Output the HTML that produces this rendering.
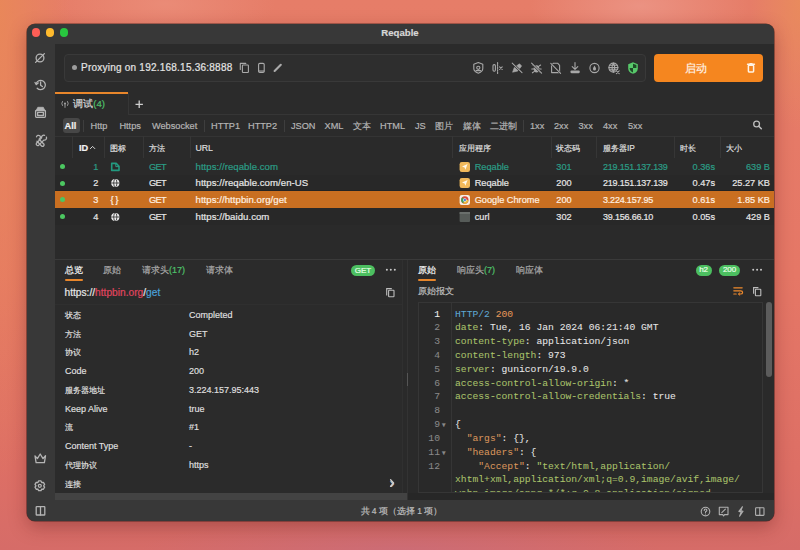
<!DOCTYPE html>
<html><head><meta charset="utf-8"><style>
*{box-sizing:border-box;margin:0;padding:0}
html,body{width:800px;height:550px;overflow:hidden}
body{font-family:"Liberation Sans",sans-serif;position:relative;
background:
 radial-gradient(ellipse 110px 45px at 640px 6px, rgba(236,150,135,0.85), rgba(236,150,135,0) 100%),
 radial-gradient(ellipse 110px 40px at 165px 4px, rgba(236,145,125,0.7), rgba(236,145,125,0) 100%),
 radial-gradient(ellipse 260px 32px at 400px 550px, rgba(196,108,128,0.55), rgba(196,108,128,0) 100%),
 radial-gradient(ellipse 50px 130px at 800px 0px, rgba(233,140,92,0.9), rgba(233,140,92,0) 100%),
 radial-gradient(ellipse 70px 480px at 0px 0px, rgba(233,136,88,0.9), rgba(233,136,88,0) 100%),
 linear-gradient(180deg,#e67d68 0%,#e57766 50%,#dd6f65 85%,#d66c68 100%);
}
.abs{position:absolute}
.t{position:absolute;white-space:nowrap;-webkit-text-stroke:0.2px currentColor}
svg.i{position:absolute;overflow:visible}
</style></head><body>
<div class="abs" style="left:26.5px;top:24px;width:747px;height:496.6px;border-radius:8px;background:#383838;box-shadow:0 0 0 0.6px rgba(20,10,10,0.6),0 6px 18px rgba(90,20,20,0.35);overflow:hidden">
</div>
<div class="t" style="top:27.00px;font-size:9.6px;color:#d6d6d6;font-weight:bold;line-height:12px;left:300.00px;width:200px;text-align:center;">Reqable</div>
<div class="abs" style="left:31.7px;top:28.2px;width:8.6px;height:8.6px;border-radius:50%;background:#fd5e56"></div>
<div class="abs" style="left:45.5px;top:28.2px;width:8.6px;height:8.6px;border-radius:50%;background:#feba2d"></div>
<div class="abs" style="left:59.5px;top:28.2px;width:8.6px;height:8.6px;border-radius:50%;background:#28c73f"></div>
<div class="abs" style="left:54.5px;top:44px;width:719.0px;height:456px;background:#2b2b2b;"></div>
<div class="abs" style="left:64px;top:54px;width:582px;height:28px;background:#2e2e2e;border:1px solid #393939;border-radius:4px"></div>
<div class="abs" style="left:72.2px;top:65px;width:5px;height:5px;border-radius:50%;background:#9c9c9c"></div>
<div class="t" style="top:62.00px;font-size:10px;color:#e4e4e4;font-weight:normal;line-height:12px;left:81.00px;letter-spacing:0.23px">Proxying on 192.168.15.36:8888</div>
<div class="abs" style="left:654px;top:54px;width:109px;height:28px;background:#f5861f;border-radius:4px"></div>
<div class="t" style="top:62.00px;font-size:10.5px;color:#fff3e6;font-weight:normal;line-height:12px;left:596.00px;width:200px;text-align:center;">启动</div>
<div class="abs" style="left:54.5px;top:92.2px;width:73.5px;height:1.7999999999999972px;background:#e8862b;"></div>
<div class="t" style="top:98.00px;font-size:9.6px;color:#d8d8d8;font-weight:normal;line-height:12px;left:73.20px;">调试<span style="color:#4fc26b">(4)</span></div>
<div class="abs" style="left:128px;top:93px;width:1px;height:21.5px;background:#363636;"></div>
<div class="abs" style="left:128px;top:114px;width:645.5px;height:1px;background:#363636;"></div>
<div class="abs" style="left:63.2px;top:118.3px;width:16.599999999999994px;height:14.399999999999991px;background:#474747;border-radius:3px"></div>
<div class="t" style="top:120.00px;font-size:9.2px;color:#f0f0f0;font-weight:bold;line-height:12px;left:64.50px;">All</div>
<div class="t" style="top:120.00px;font-size:9.2px;color:#b4b4b4;font-weight:normal;line-height:12px;left:90.50px;width:22.400000000000006px;">Http</div>
<div class="t" style="top:120.00px;font-size:9.2px;color:#b4b4b4;font-weight:normal;line-height:12px;left:119.40px;width:25.69999999999999px;">Https</div>
<div class="t" style="top:120.00px;font-size:9.2px;color:#b4b4b4;font-weight:normal;line-height:12px;left:152.00px;width:49px;">Websocket</div>
<div class="t" style="top:120.00px;font-size:9.2px;color:#b4b4b4;font-weight:normal;line-height:12px;left:211.00px;width:31px;">HTTP1</div>
<div class="t" style="top:120.00px;font-size:9.2px;color:#b4b4b4;font-weight:normal;line-height:12px;left:248.00px;width:32.80000000000001px;">HTTP2</div>
<div class="t" style="top:120.00px;font-size:9.2px;color:#b4b4b4;font-weight:normal;line-height:12px;left:291.00px;width:27px;">JSON</div>
<div class="t" style="top:120.00px;font-size:9.2px;color:#b4b4b4;font-weight:normal;line-height:12px;left:324.50px;width:22.0px;">XML</div>
<div class="t" style="top:120.00px;font-size:8.5px;color:#b4b4b4;font-weight:normal;line-height:12px;left:353.00px;width:21px;">文本</div>
<div class="t" style="top:120.00px;font-size:9.2px;color:#b4b4b4;font-weight:normal;line-height:12px;left:380.00px;width:28px;">HTML</div>
<div class="t" style="top:120.00px;font-size:9.2px;color:#b4b4b4;font-weight:normal;line-height:12px;left:415.00px;width:14px;">JS</div>
<div class="t" style="top:120.00px;font-size:8.5px;color:#b4b4b4;font-weight:normal;line-height:12px;left:435.00px;width:20.5px;">图片</div>
<div class="t" style="top:120.00px;font-size:8.5px;color:#b4b4b4;font-weight:normal;line-height:12px;left:462.50px;width:20.5px;">媒体</div>
<div class="t" style="top:120.00px;font-size:8.5px;color:#b4b4b4;font-weight:normal;line-height:12px;left:490.00px;width:30px;">二进制</div>
<div class="t" style="top:120.00px;font-size:9.2px;color:#b4b4b4;font-weight:normal;line-height:12px;left:530.00px;width:16.5px;">1xx</div>
<div class="t" style="top:120.00px;font-size:9.2px;color:#b4b4b4;font-weight:normal;line-height:12px;left:554.00px;width:17.5px;">2xx</div>
<div class="t" style="top:120.00px;font-size:9.2px;color:#b4b4b4;font-weight:normal;line-height:12px;left:578.50px;width:18.0px;">3xx</div>
<div class="t" style="top:120.00px;font-size:9.2px;color:#b4b4b4;font-weight:normal;line-height:12px;left:603.00px;width:17.5px;">4xx</div>
<div class="t" style="top:120.00px;font-size:9.2px;color:#b4b4b4;font-weight:normal;line-height:12px;left:628.00px;width:17.5px;">5xx</div>
<div class="abs" style="left:83.3px;top:119.5px;width:1.0px;height:12.5px;background:#3e3e3e;"></div>
<div class="abs" style="left:203.7px;top:119.5px;width:1.0px;height:12.5px;background:#3e3e3e;"></div>
<div class="abs" style="left:284px;top:119.5px;width:1px;height:12.5px;background:#3e3e3e;"></div>
<div class="abs" style="left:522.5px;top:119.5px;width:1.0px;height:12.5px;background:#3e3e3e;"></div>
<div class="abs" style="left:54.5px;top:136px;width:719.0px;height:124px;background:#2a2a2a;"></div>
<div class="abs" style="left:54.5px;top:135.6px;width:719.0px;height:1.0px;background:#343434;"></div>
<div class="abs" style="left:54.5px;top:157.6px;width:719.0px;height:1.0px;background:#363636;"></div>
<div class="abs" style="left:72.2px;top:136px;width:1.0px;height:22px;background:#363636;"></div>
<div class="abs" style="left:103.9px;top:136px;width:1.0px;height:22px;background:#363636;"></div>
<div class="abs" style="left:142.7px;top:136px;width:1.0px;height:22px;background:#363636;"></div>
<div class="abs" style="left:189.6px;top:136px;width:1.0px;height:22px;background:#363636;"></div>
<div class="abs" style="left:452px;top:136px;width:1px;height:22px;background:#363636;"></div>
<div class="abs" style="left:550.5px;top:136px;width:1.0px;height:22px;background:#363636;"></div>
<div class="abs" style="left:595.8px;top:136px;width:1.0px;height:22px;background:#363636;"></div>
<div class="abs" style="left:674.3px;top:136px;width:1.0px;height:22px;background:#363636;"></div>
<div class="abs" style="left:719.8px;top:136px;width:1.0px;height:22px;background:#363636;"></div>
<div class="t" style="top:141.50px;font-size:9.2px;color:#f2f2f2;font-weight:bold;line-height:12px;left:79.00px;">ID</div>
<div class="t" style="top:141.50px;font-size:8.4px;color:#dcdcdc;font-weight:normal;line-height:12px;left:109.70px;">图标</div>
<div class="t" style="top:141.50px;font-size:8.4px;color:#dedede;font-weight:normal;line-height:12px;left:148.90px;">方法</div>
<div class="t" style="top:141.50px;font-size:8.8px;color:#dedede;font-weight:normal;line-height:12px;left:195.40px;">URL</div>
<div class="t" style="top:141.50px;font-size:8.4px;color:#dedede;font-weight:normal;line-height:12px;left:458.80px;">应用程序</div>
<div class="t" style="top:141.50px;font-size:8.4px;color:#dedede;font-weight:normal;line-height:12px;left:556.30px;">状态码</div>
<div class="t" style="top:141.50px;font-size:8.4px;color:#dedede;font-weight:normal;line-height:12px;left:603.00px;">服务器IP</div>
<div class="t" style="top:141.50px;font-size:8.4px;color:#dedede;font-weight:normal;line-height:12px;left:680.00px;">时长</div>
<div class="t" style="top:141.50px;font-size:8.4px;color:#dedede;font-weight:normal;line-height:12px;left:726.00px;">大小</div>
<div class="abs" style="left:54.5px;top:158.4px;width:719.0px;height:16.599999999999994px;background:#2a2a2a;"></div>
<div class="abs" style="left:59.6px;top:164.10px;width:5.2px;height:5.2px;border-radius:50%;background:#4cc761"></div>
<div class="t" style="top:160.70px;font-size:9.2px;color:#2a9d86;font-weight:normal;line-height:12px;right:701.60px;">1</div>
<div class="t" style="top:160.70px;font-size:9.2px;color:#2a9d86;font-weight:normal;line-height:12px;left:149.00px;letter-spacing:-0.6px">GET</div>
<div class="t" style="top:160.70px;font-size:9.6px;color:#2a9d86;font-weight:normal;line-height:12px;left:195.50px;letter-spacing:0.05px">https://reqable.com</div>
<div class="t" style="top:160.70px;font-size:9.2px;color:#2a9d86;font-weight:normal;line-height:12px;left:474.70px;">Reqable</div>
<div class="t" style="top:160.70px;font-size:9.2px;color:#2a9d86;font-weight:normal;line-height:12px;left:556.30px;">301</div>
<div class="t" style="top:160.70px;font-size:9px;color:#2a9d86;font-weight:normal;line-height:12px;left:603.00px;letter-spacing:-0.2px">219.151.137.139</div>
<div class="t" style="top:160.70px;font-size:9.2px;color:#2a9d86;font-weight:normal;line-height:12px;right:85.00px;">0.36s</div>
<div class="t" style="top:160.70px;font-size:9.2px;color:#2a9d86;font-weight:normal;line-height:12px;right:30.00px;">639 B</div>
<div class="abs" style="left:54.5px;top:175.0px;width:719.0px;height:16.599999999999994px;background:#282828;"></div>
<div class="abs" style="left:59.6px;top:180.70px;width:5.2px;height:5.2px;border-radius:50%;background:#4cc761"></div>
<div class="t" style="top:177.30px;font-size:9.2px;color:#e6e6e6;font-weight:normal;line-height:12px;right:701.60px;">2</div>
<div class="t" style="top:177.30px;font-size:9.2px;color:#e6e6e6;font-weight:normal;line-height:12px;left:149.00px;letter-spacing:-0.6px">GET</div>
<div class="t" style="top:177.30px;font-size:9.6px;color:#e6e6e6;font-weight:normal;line-height:12px;left:195.50px;letter-spacing:0.05px">https://reqable.com/en-US</div>
<div class="t" style="top:177.30px;font-size:9.2px;color:#e6e6e6;font-weight:normal;line-height:12px;left:474.70px;">Reqable</div>
<div class="t" style="top:177.30px;font-size:9.2px;color:#e6e6e6;font-weight:normal;line-height:12px;left:556.30px;">200</div>
<div class="t" style="top:177.30px;font-size:9px;color:#e6e6e6;font-weight:normal;line-height:12px;left:603.00px;letter-spacing:-0.2px">219.151.137.139</div>
<div class="t" style="top:177.30px;font-size:9.2px;color:#e6e6e6;font-weight:normal;line-height:12px;right:85.00px;">0.47s</div>
<div class="t" style="top:177.30px;font-size:9.2px;color:#e6e6e6;font-weight:normal;line-height:12px;right:30.00px;">25.27 KB</div>
<div class="abs" style="left:54.5px;top:190.2px;width:719.0px;height:19.400000000000006px;background:#232323;"></div>
<div class="abs" style="left:54.5px;top:191.0px;width:719.0px;height:17.80000000000001px;background:#c96f21;"></div>
<div class="abs" style="left:59.6px;top:197.30px;width:5.2px;height:5.2px;border-radius:50%;background:#4cc761"></div>
<div class="t" style="top:193.90px;font-size:9.2px;color:#fff0e0;font-weight:normal;line-height:12px;right:701.60px;">3</div>
<div class="t" style="top:193.90px;font-size:9.2px;color:#fff0e0;font-weight:normal;line-height:12px;left:149.00px;letter-spacing:-0.6px">GET</div>
<div class="t" style="top:193.90px;font-size:9.6px;color:#fff0e0;font-weight:normal;line-height:12px;left:195.50px;letter-spacing:0.05px">https://httpbin.org/get</div>
<div class="t" style="top:193.90px;font-size:9.2px;color:#fff0e0;font-weight:normal;line-height:12px;left:474.70px;">Google Chrome</div>
<div class="t" style="top:193.90px;font-size:9.2px;color:#fff0e0;font-weight:normal;line-height:12px;left:556.30px;">200</div>
<div class="t" style="top:193.90px;font-size:9px;color:#fff0e0;font-weight:normal;line-height:12px;left:603.00px;letter-spacing:-0.2px">3.224.157.95</div>
<div class="t" style="top:193.90px;font-size:9.2px;color:#fff0e0;font-weight:normal;line-height:12px;right:85.00px;">0.61s</div>
<div class="t" style="top:193.90px;font-size:9.2px;color:#fff0e0;font-weight:normal;line-height:12px;right:30.00px;">1.85 KB</div>
<div class="abs" style="left:54.5px;top:208.2px;width:719.0px;height:16.600000000000023px;background:#282828;"></div>
<div class="abs" style="left:59.6px;top:213.90px;width:5.2px;height:5.2px;border-radius:50%;background:#4cc761"></div>
<div class="t" style="top:210.50px;font-size:9.2px;color:#e6e6e6;font-weight:normal;line-height:12px;right:701.60px;">4</div>
<div class="t" style="top:210.50px;font-size:9.2px;color:#e6e6e6;font-weight:normal;line-height:12px;left:149.00px;letter-spacing:-0.6px">GET</div>
<div class="t" style="top:210.50px;font-size:9.6px;color:#e6e6e6;font-weight:normal;line-height:12px;left:195.50px;letter-spacing:0.05px">https://baidu.com</div>
<div class="t" style="top:210.50px;font-size:9.2px;color:#e6e6e6;font-weight:normal;line-height:12px;left:474.70px;">curl</div>
<div class="t" style="top:210.50px;font-size:9.2px;color:#e6e6e6;font-weight:normal;line-height:12px;left:556.30px;">302</div>
<div class="t" style="top:210.50px;font-size:9px;color:#e6e6e6;font-weight:normal;line-height:12px;left:603.00px;letter-spacing:-0.2px">39.156.66.10</div>
<div class="t" style="top:210.50px;font-size:9.2px;color:#e6e6e6;font-weight:normal;line-height:12px;right:85.00px;">0.05s</div>
<div class="t" style="top:210.50px;font-size:9.2px;color:#e6e6e6;font-weight:normal;line-height:12px;right:30.00px;">429 B</div>
<div class="abs" style="left:54.5px;top:258.8px;width:719.0px;height:1.0px;background:#3a3a3a;"></div>
<div class="abs" style="left:54.5px;top:259.8px;width:347.5px;height:233.2px;background:#2b2b2b;"></div>
<div class="t" style="top:264.00px;font-size:9px;color:#f4f4f4;font-weight:normal;line-height:12px;left:65.00px;">总览</div>
<div class="abs" style="left:65px;top:279px;width:18px;height:2px;background:#e8862b;border-radius:1px"></div>
<div class="t" style="top:264.00px;font-size:9px;color:#a8a8a8;font-weight:normal;line-height:12px;left:103.00px;">原始</div>
<div class="t" style="top:264.00px;font-size:9px;color:#a8a8a8;font-weight:normal;line-height:12px;left:142.00px;">请求头<span style="color:#4fc26b">(17)</span></div>
<div class="t" style="top:264.00px;font-size:9px;color:#a8a8a8;font-weight:normal;line-height:12px;left:205.50px;">请求体</div>
<div class="abs" style="left:351px;top:265px;width:24px;height:11px;background:#4cbf60;border-radius:6px"></div>
<div class="t" style="top:264.50px;font-size:8px;color:#e8ffe8;font-weight:normal;line-height:12px;left:263.00px;width:200px;text-align:center;">GET</div>
<svg class="i" style="left:383px;top:265px" width="16" height="10" viewBox="383 265 16 10"><circle cx="386.9" cy="269.8" r="1" fill="#c8c8c8"/><circle cx="390.8" cy="269.8" r="1" fill="#c8c8c8"/><circle cx="394.8" cy="269.8" r="1" fill="#c8c8c8"/></svg>
<div class="t" style="top:287.00px;font-size:10.2px;color:#e8e8e8;font-weight:normal;line-height:12px;left:64.50px;">https://<span style="color:#e0455f">httpbin.org</span>/<span style="color:#4aa0d8">get</span></div>
<div class="abs" style="left:54.5px;top:304.3px;width:347.5px;height:0.8000000000000114px;background:#2f2f2f;"></div>
<div class="t" style="top:308.80px;font-size:8.4px;color:#dedede;font-weight:normal;line-height:12px;left:65.00px;">状态</div>
<div class="t" style="top:308.80px;font-size:9px;color:#dedede;font-weight:normal;line-height:12px;left:189.00px;">Completed</div>
<div class="t" style="top:327.55px;font-size:8.4px;color:#dedede;font-weight:normal;line-height:12px;left:65.00px;">方法</div>
<div class="t" style="top:327.55px;font-size:9px;color:#dedede;font-weight:normal;line-height:12px;left:189.00px;">GET</div>
<div class="t" style="top:346.30px;font-size:8.4px;color:#dedede;font-weight:normal;line-height:12px;left:65.00px;">协议</div>
<div class="t" style="top:346.30px;font-size:9px;color:#dedede;font-weight:normal;line-height:12px;left:189.00px;">h2</div>
<div class="t" style="top:365.05px;font-size:9px;color:#dedede;font-weight:normal;line-height:12px;left:65.00px;">Code</div>
<div class="t" style="top:365.05px;font-size:9px;color:#dedede;font-weight:normal;line-height:12px;left:189.00px;">200</div>
<div class="t" style="top:383.80px;font-size:8.4px;color:#dedede;font-weight:normal;line-height:12px;left:65.00px;">服务器地址</div>
<div class="t" style="top:383.80px;font-size:9px;color:#dedede;font-weight:normal;line-height:12px;left:189.00px;">3.224.157.95:443</div>
<div class="t" style="top:402.55px;font-size:9px;color:#dedede;font-weight:normal;line-height:12px;left:65.00px;">Keep Alive</div>
<div class="t" style="top:402.55px;font-size:9px;color:#dedede;font-weight:normal;line-height:12px;left:189.00px;">true</div>
<div class="t" style="top:421.30px;font-size:8.4px;color:#dedede;font-weight:normal;line-height:12px;left:65.00px;">流</div>
<div class="t" style="top:421.30px;font-size:9px;color:#dedede;font-weight:normal;line-height:12px;left:189.00px;">#1</div>
<div class="t" style="top:440.05px;font-size:9px;color:#dedede;font-weight:normal;line-height:12px;left:65.00px;">Content Type</div>
<div class="t" style="top:440.05px;font-size:9px;color:#dedede;font-weight:normal;line-height:12px;left:189.00px;">-</div>
<div class="t" style="top:458.80px;font-size:8.4px;color:#dedede;font-weight:normal;line-height:12px;left:65.00px;">代理协议</div>
<div class="t" style="top:458.80px;font-size:9px;color:#dedede;font-weight:normal;line-height:12px;left:189.00px;">https</div>
<div class="t" style="top:477.55px;font-size:8.4px;color:#dedede;font-weight:normal;line-height:12px;left:65.00px;">连接</div>
<div class="t" style="top:477.00px;font-size:14px;color:#cfcfcf;font-weight:normal;line-height:12px;left:292.00px;width:200px;text-align:center;">›</div>
<div class="abs" style="left:402px;top:259.8px;width:6px;height:240.2px;background:#2a2a2a;"></div>
<div class="abs" style="left:401.6px;top:259.8px;width:0.7999999999999545px;height:233.2px;background:#303030;"></div>
<div class="abs" style="left:54.5px;top:493px;width:352.5px;height:7px;background:#434343;"></div>
<div class="abs" style="left:407px;top:259.8px;width:1px;height:240.2px;background:#333333;"></div>
<div class="abs" style="left:406.8px;top:372.7px;width:1.1999999999999886px;height:13.300000000000011px;background:#555555;"></div>
<div class="abs" style="left:408px;top:259.8px;width:365.5px;height:240.2px;background:#2a2a2a;"></div>
<div class="t" style="top:264.00px;font-size:9px;color:#f4f4f4;font-weight:normal;line-height:12px;left:418.00px;">原始</div>
<div class="abs" style="left:418px;top:279px;width:18px;height:2px;background:#e8862b;border-radius:1px"></div>
<div class="t" style="top:264.00px;font-size:9px;color:#a8a8a8;font-weight:normal;line-height:12px;left:457.00px;">响应头<span style="color:#4fc26b">(7)</span></div>
<div class="t" style="top:264.00px;font-size:9px;color:#a8a8a8;font-weight:normal;line-height:12px;left:516.00px;">响应体</div>
<div class="abs" style="left:695.5px;top:264.5px;width:16.299999999999955px;height:11.300000000000011px;background:#4cbf60;border-radius:6px"></div>
<div class="t" style="top:264.30px;font-size:8px;color:#e8ffe8;font-weight:normal;line-height:12px;left:603.60px;width:200px;text-align:center;">h2</div>
<div class="abs" style="left:718.8px;top:264.5px;width:21.700000000000045px;height:11.300000000000011px;background:#4cbf60;border-radius:6px"></div>
<div class="t" style="top:264.30px;font-size:8px;color:#e8ffe8;font-weight:normal;line-height:12px;left:629.60px;width:200px;text-align:center;">200</div>
<svg class="i" style="left:750px;top:265px" width="16" height="10" viewBox="750 265 16 10"><circle cx="753.2" cy="269.8" r="1" fill="#c8c8c8"/><circle cx="757.1" cy="269.8" r="1" fill="#c8c8c8"/><circle cx="761" cy="269.8" r="1" fill="#c8c8c8"/></svg>
<div class="t" style="top:285.00px;font-size:8.5px;color:#bdbdbd;font-weight:normal;line-height:12px;left:418.00px;">原始报文</div>
<div class="abs" style="left:418.3px;top:302px;width:345.2px;height:191px;background:#292929;border:1px solid #363636;border-bottom:none"></div>
<div class="abs" style="left:451px;top:303px;width:1px;height:190px;background:#353535;"></div>
<div class="t" style="top:308.50px;font-size:9.7px;color:#f0f0f0;font-weight:normal;line-height:12px;font-family:'Liberation Mono',monospace;right:360.00px;-webkit-text-stroke:0.05px currentColor;">1</div>
<div class="t" style="top:308.50px;font-size:9.7px;color:#e6e6e6;font-weight:normal;line-height:12px;font-family:'Liberation Mono',monospace;left:455.00px;white-space:pre;-webkit-text-stroke:0.05px currentColor;"><span style="color:#5fa8d3">HTTP/2</span> <span style="color:#e3975a">200</span></div>
<div class="t" style="top:322.32px;font-size:9.7px;color:#8a8a8a;font-weight:normal;line-height:12px;font-family:'Liberation Mono',monospace;right:360.00px;-webkit-text-stroke:0.05px currentColor;">2</div>
<div class="t" style="top:322.32px;font-size:9.7px;color:#e6e6e6;font-weight:normal;line-height:12px;font-family:'Liberation Mono',monospace;left:455.00px;white-space:pre;-webkit-text-stroke:0.05px currentColor;"><span style="color:#a9c26b">date</span>: Tue, 16 Jan 2024 06:21:40 GMT</div>
<div class="t" style="top:336.14px;font-size:9.7px;color:#8a8a8a;font-weight:normal;line-height:12px;font-family:'Liberation Mono',monospace;right:360.00px;-webkit-text-stroke:0.05px currentColor;">3</div>
<div class="t" style="top:336.14px;font-size:9.7px;color:#e6e6e6;font-weight:normal;line-height:12px;font-family:'Liberation Mono',monospace;left:455.00px;white-space:pre;-webkit-text-stroke:0.05px currentColor;"><span style="color:#a9c26b">content-type</span>: application/json</div>
<div class="t" style="top:349.96px;font-size:9.7px;color:#8a8a8a;font-weight:normal;line-height:12px;font-family:'Liberation Mono',monospace;right:360.00px;-webkit-text-stroke:0.05px currentColor;">4</div>
<div class="t" style="top:349.96px;font-size:9.7px;color:#e6e6e6;font-weight:normal;line-height:12px;font-family:'Liberation Mono',monospace;left:455.00px;white-space:pre;-webkit-text-stroke:0.05px currentColor;"><span style="color:#a9c26b">content-length</span>: 973</div>
<div class="t" style="top:363.78px;font-size:9.7px;color:#8a8a8a;font-weight:normal;line-height:12px;font-family:'Liberation Mono',monospace;right:360.00px;-webkit-text-stroke:0.05px currentColor;">5</div>
<div class="t" style="top:363.78px;font-size:9.7px;color:#e6e6e6;font-weight:normal;line-height:12px;font-family:'Liberation Mono',monospace;left:455.00px;white-space:pre;-webkit-text-stroke:0.05px currentColor;"><span style="color:#a9c26b">server</span>: gunicorn/19.9.0</div>
<div class="t" style="top:377.60px;font-size:9.7px;color:#8a8a8a;font-weight:normal;line-height:12px;font-family:'Liberation Mono',monospace;right:360.00px;-webkit-text-stroke:0.05px currentColor;">6</div>
<div class="t" style="top:377.60px;font-size:9.7px;color:#e6e6e6;font-weight:normal;line-height:12px;font-family:'Liberation Mono',monospace;left:455.00px;white-space:pre;-webkit-text-stroke:0.05px currentColor;"><span style="color:#a9c26b">access-control-allow-origin</span>: *</div>
<div class="t" style="top:391.42px;font-size:9.7px;color:#8a8a8a;font-weight:normal;line-height:12px;font-family:'Liberation Mono',monospace;right:360.00px;-webkit-text-stroke:0.05px currentColor;">7</div>
<div class="t" style="top:391.42px;font-size:9.7px;color:#e6e6e6;font-weight:normal;line-height:12px;font-family:'Liberation Mono',monospace;left:455.00px;white-space:pre;-webkit-text-stroke:0.05px currentColor;"><span style="color:#a9c26b">access-control-allow-credentials</span>: true</div>
<div class="t" style="top:405.24px;font-size:9.7px;color:#8a8a8a;font-weight:normal;line-height:12px;font-family:'Liberation Mono',monospace;right:360.00px;-webkit-text-stroke:0.05px currentColor;">8</div>
<div class="t" style="top:405.24px;font-size:9.7px;color:#e6e6e6;font-weight:normal;line-height:12px;font-family:'Liberation Mono',monospace;left:455.00px;white-space:pre;-webkit-text-stroke:0.05px currentColor;"></div>
<div class="t" style="top:419.06px;font-size:9.7px;color:#8a8a8a;font-weight:normal;line-height:12px;font-family:'Liberation Mono',monospace;right:360.00px;-webkit-text-stroke:0.05px currentColor;">9</div>
<div class="t" style="top:419.06px;font-size:7px;color:#8a8a8a;font-weight:normal;line-height:12px;left:442.20px;">▾</div>
<div class="t" style="top:419.06px;font-size:9.7px;color:#e6e6e6;font-weight:normal;line-height:12px;font-family:'Liberation Mono',monospace;left:455.00px;white-space:pre;-webkit-text-stroke:0.05px currentColor;">{</div>
<div class="t" style="top:432.88px;font-size:9.7px;color:#8a8a8a;font-weight:normal;line-height:12px;font-family:'Liberation Mono',monospace;right:360.00px;-webkit-text-stroke:0.05px currentColor;">10</div>
<div class="t" style="top:432.88px;font-size:9.7px;color:#e6e6e6;font-weight:normal;line-height:12px;font-family:'Liberation Mono',monospace;left:455.00px;white-space:pre;-webkit-text-stroke:0.05px currentColor;">  <span style="color:#d8955c">"args"</span>: {},</div>
<div class="t" style="top:446.70px;font-size:9.7px;color:#8a8a8a;font-weight:normal;line-height:12px;font-family:'Liberation Mono',monospace;right:360.00px;-webkit-text-stroke:0.05px currentColor;">11</div>
<div class="t" style="top:446.70px;font-size:7px;color:#8a8a8a;font-weight:normal;line-height:12px;left:442.20px;">▾</div>
<div class="t" style="top:446.70px;font-size:9.7px;color:#e6e6e6;font-weight:normal;line-height:12px;font-family:'Liberation Mono',monospace;left:455.00px;white-space:pre;-webkit-text-stroke:0.05px currentColor;">  <span style="color:#d8955c">"headers"</span>: {</div>
<div class="t" style="top:460.52px;font-size:9.7px;color:#8a8a8a;font-weight:normal;line-height:12px;font-family:'Liberation Mono',monospace;right:360.00px;-webkit-text-stroke:0.05px currentColor;">12</div>
<div class="t" style="top:460.52px;font-size:9.7px;color:#e6e6e6;font-weight:normal;line-height:12px;font-family:'Liberation Mono',monospace;left:455.00px;white-space:pre;-webkit-text-stroke:0.05px currentColor;">    <span style="color:#d8955c">"Accept"</span>: <span style="color:#a9c26b">"text/html,application/</span></div>
<div class="t" style="top:474.34px;font-size:9.7px;color:#e6e6e6;font-weight:normal;line-height:12px;font-family:'Liberation Mono',monospace;left:455.00px;white-space:pre;-webkit-text-stroke:0.05px currentColor;"><span style="color:#a9c26b">xhtml+xml,application/xml;q=0.9,image/avif,image/</span></div>
<div class="t" style="top:488.16px;font-size:9.7px;color:#e6e6e6;font-weight:normal;line-height:12px;font-family:'Liberation Mono',monospace;left:455.00px;white-space:pre;-webkit-text-stroke:0.05px currentColor;"><span style="color:#a9c26b">webp,image/apng,*/*;q=0.8,application/signed-</span></div>
<div class="abs" style="left:766.2px;top:301.8px;width:6.0px;height:75.69999999999999px;background:#5c5c5c;border-radius:3px"></div>
<div class="abs" style="left:408px;top:493px;width:365.5px;height:7px;background:#272727;"></div>
<div class="abs" style="left:418.3px;top:492.4px;width:345.2px;height:0.8000000000000114px;background:#363636;"></div>
<svg class="i" style="left:32px;top:50px;" width="16" height="16" viewBox="32 50 16 16"><circle cx="40" cy="58" r="3.9" stroke="#b4b4b4" fill="none" stroke-width="1.3" stroke-linecap="round" stroke-linejoin="round"/><path d="M35.6 62.4 L44.4 53.6" stroke="#b4b4b4" fill="none" stroke-width="1.3" stroke-linecap="round" stroke-linejoin="round" stroke-width="1.6"/></svg>
<svg class="i" style="left:32px;top:77px;" width="16" height="16" viewBox="32 77 16 16"><path d="M36.3 83.2 A4.7 4.7 0 1 1 37.2 88.2" stroke="#b4b4b4" fill="none" stroke-width="1.3" stroke-linecap="round" stroke-linejoin="round"/><path d="M35 82.5 L36.3 84.6 L38.2 83" stroke="#b4b4b4" fill="none" stroke-width="1.3" stroke-linecap="round" stroke-linejoin="round" stroke-width="1.1"/><path d="M40.6 82 L40.6 85.2 L42.4 86.6" stroke="#b4b4b4" fill="none" stroke-width="1.3" stroke-linecap="round" stroke-linejoin="round" stroke-width="1.2"/></svg>
<svg class="i" style="left:32px;top:104px;" width="16" height="16" viewBox="32 104 16 16"><path d="M36.2 110.5 L37.8 107.3 L43.3 107.3 L44.8 110.5 Z" fill="#b4b4b4" stroke="#b4b4b4" stroke-width="0.8" stroke-linejoin="round"/><rect x="35.6" y="110.5" width="9.8" height="6.9" rx="0.8" stroke="#b4b4b4" fill="none" stroke-width="1.3" stroke-linecap="round" stroke-linejoin="round"/><rect x="37.6" y="112.4" width="5.8" height="3.1" stroke="#b4b4b4" fill="none" stroke-width="1.3" stroke-linecap="round" stroke-linejoin="round" stroke-width="0.8"/></svg>
<svg class="i" style="left:32px;top:131px;" width="16" height="18" viewBox="32 131 16 18"><path d="M36.5 136.8 a2 2 0 1 1 2.6 2.4 L44 144.2 a1.6 1.6 0 0 1 -2.2 2 L37 141.3" stroke="#b4b4b4" fill="none" stroke-width="1.3" stroke-linecap="round" stroke-linejoin="round" stroke-width="1.2"/><path d="M44.6 135.3 a2.2 2.2 0 0 0 -3 2.6 L36.4 143.3 a1.6 1.6 0 0 0 2.2 2.1 L43.8 140.1 a2.2 2.2 0 0 0 2.6 -3" stroke="#b4b4b4" fill="none" stroke-width="1.3" stroke-linecap="round" stroke-linejoin="round" stroke-width="1.2"/></svg>
<svg class="i" style="left:32px;top:450px;" width="16" height="16" viewBox="32 450 16 16"><path d="M35 455.8 L37.4 458.6 L40.2 454 L43 458.6 L45.5 455.8 L44.4 462.6 L36.1 462.6 Z" stroke="#b4b4b4" fill="none" stroke-width="1.3" stroke-linecap="round" stroke-linejoin="round" stroke-width="1.3"/></svg>
<svg class="i" style="left:32px;top:478px;" width="16" height="16" viewBox="32 478 16 16"><path d="M38.59 480.95 L41.01 480.95 L41.70 482.51 L43.40 482.33 L44.61 484.42 L43.60 485.80 L44.61 487.18 L43.40 489.27 L41.70 489.09 L41.01 490.65 L38.59 490.65 L37.90 489.09 L36.20 489.27 L34.99 487.18 L36.00 485.80 L34.99 484.42 L36.20 482.33 L37.90 482.51 Z" stroke="#b4b4b4" fill="none" stroke-width="1.3" stroke-linecap="round" stroke-linejoin="round" stroke-width="1.15"/><circle cx="39.8" cy="485.8" r="1.5" stroke="#b4b4b4" fill="none" stroke-width="1.3" stroke-linecap="round" stroke-linejoin="round" stroke-width="1.1"/></svg>
<svg class="i" style="left:32px;top:503px;" width="16" height="16" viewBox="32 503 16 16"><rect x="36.2" y="506.6" width="8.6" height="8.4" rx="0.6" stroke="#b4b4b4" fill="none" stroke-width="1.3" stroke-linecap="round" stroke-linejoin="round" stroke-width="1.2"/><path d="M40.5 506.6 L40.5 515" stroke="#b4b4b4" fill="none" stroke-width="1.3" stroke-linecap="round" stroke-linejoin="round" stroke-width="1.2"/></svg>
<svg class="i" style="left:236px;top:60px;" width="16" height="16" viewBox="236 60 16 16"><path d="M240.3 69.4 L240.3 63.4 L245.8 63.4" stroke="#aaaaaa" fill="none" stroke-width="1.1" stroke-linecap="round" stroke-linejoin="round"/><rect x="242.4" y="65" width="6" height="7.5" rx="0.7" stroke="#aaaaaa" fill="none" stroke-width="1.1" stroke-linecap="round" stroke-linejoin="round"/></svg>
<svg class="i" style="left:255px;top:60px;" width="14" height="16" viewBox="255 60 14 16"><rect x="258.6" y="63.4" width="5.6" height="9" rx="1.2" stroke="#aaaaaa" fill="none" stroke-width="1.1" stroke-linecap="round" stroke-linejoin="round"/><path d="M258.8 71 L264 71" stroke="#aaaaaa" fill="none" stroke-width="1.1" stroke-linecap="round" stroke-linejoin="round" stroke-width="1.6"/></svg>
<svg class="i" style="left:270px;top:60px;" width="16" height="16" viewBox="270 60 16 16"><path d="M274.6 71 L280.8 64.8" stroke="#aaaaaa" stroke-width="2.1" stroke-linecap="round"/></svg>
<svg class="i" style="left:470px;top:60px;" width="16" height="16" viewBox="470 60 16 16"><path d="M478.3 62.6 L482.8 64.3 L482.8 68.6 Q482.8 71.8 478.3 73.2 Q473.8 71.8 473.8 68.6 L473.8 64.3 Z" stroke="#a8a8a8" fill="none" stroke-width="1.1" stroke-linecap="round" stroke-linejoin="round"/><circle cx="478.3" cy="67.8" r="1.6" stroke="#a8a8a8" fill="none" stroke-width="1.1" stroke-linecap="round" stroke-linejoin="round" stroke-width="0.9"/><path d="M476 70.6 L480.6 70.6" stroke="#a8a8a8" fill="none" stroke-width="1.1" stroke-linecap="round" stroke-linejoin="round" stroke-width="0.9"/></svg>
<svg class="i" style="left:489px;top:60px;" width="16" height="16" viewBox="489 60 16 16"><rect x="493" y="64.6" width="2.4" height="6.6" rx="1.1" stroke="#a8a8a8" fill="none" stroke-width="1.1" stroke-linecap="round" stroke-linejoin="round"/><path d="M497.6 62.5 L497.6 73.5" stroke="#a8a8a8" fill="none" stroke-width="1.1" stroke-linecap="round" stroke-linejoin="round" stroke-dasharray="1.4 1"/><path d="M499.6 66.8 L502.2 69.4 M502.2 66.8 L499.6 69.4" stroke="#a8a8a8" fill="none" stroke-width="1.1" stroke-linecap="round" stroke-linejoin="round" stroke-width="0.9"/></svg>
<svg class="i" style="left:509px;top:60px;" width="16" height="16" viewBox="509 60 16 16"><path d="M512.6 72.2 L514.3 67.5 L519.5 63.8 L521.6 65.9 L517.9 71 Z" fill="#a8a8a8" stroke="#a8a8a8" stroke-width="0.6" stroke-linejoin="round"/><path d="M512.2 63.2 L522 72.6" stroke="#282828" stroke-width="2.2"/><path d="M512.2 63.2 L522 72.6" stroke="#a8a8a8" fill="none" stroke-width="1.1" stroke-linecap="round" stroke-linejoin="round"/></svg>
<svg class="i" style="left:528px;top:60px;" width="16" height="16" viewBox="528 60 16 16"><ellipse cx="536.5" cy="68.8" rx="2.8" ry="3.6" fill="#a8a8a8"/><path d="M532.4 65 L534.4 66.4 M540.6 65 L538.6 66.4 M531.8 69 L534 69 M541.2 69 L539 69 M532.4 72.8 L534.4 71.4 M540.6 72.8 L538.6 71.4" stroke="#a8a8a8" fill="none" stroke-width="1.1" stroke-linecap="round" stroke-linejoin="round"/><path d="M531.6 63.2 L541.6 73.2" stroke="#282828" stroke-width="2.2"/><path d="M531.6 63.2 L541.6 73.2" stroke="#a8a8a8" fill="none" stroke-width="1.1" stroke-linecap="round" stroke-linejoin="round"/></svg>
<svg class="i" style="left:547px;top:60px;" width="16" height="16" viewBox="547 60 16 16"><path d="M551.6 64.6 L553.4 63.2 L557.6 63.2 L559.6 65.4 L559.6 72.6 L551.6 72.6 Z" stroke="#a8a8a8" fill="none" stroke-width="1.1" stroke-linecap="round" stroke-linejoin="round"/><path d="M550.8 63.4 L560.6 73.4" stroke="#282828" stroke-width="2"/><path d="M550.8 63.4 L560.6 73.4" stroke="#a8a8a8" fill="none" stroke-width="1.1" stroke-linecap="round" stroke-linejoin="round"/></svg>
<svg class="i" style="left:567px;top:60px;" width="16" height="16" viewBox="567 60 16 16"><path d="M575 62.6 L575 69.2 M572.2 66.6 L575 69.4 L577.8 66.6" stroke="#a8a8a8" fill="none" stroke-width="1.1" stroke-linecap="round" stroke-linejoin="round" stroke-width="1.3"/><rect x="570.4" y="70.6" width="9.4" height="2.6" rx="1.1" fill="#a8a8a8"/></svg>
<svg class="i" style="left:586px;top:60px;" width="16" height="16" viewBox="586 60 16 16"><circle cx="594.5" cy="68" r="4.6" stroke="#a8a8a8" fill="none" stroke-width="1.1" stroke-linecap="round" stroke-linejoin="round"/><path d="M594.5 65.6 Q596 68 596 69 A1.5 1.5 0 0 1 593 69 Q593 68 594.5 65.6 Z" fill="#a8a8a8"/></svg>
<svg class="i" style="left:605px;top:60px;" width="17" height="16" viewBox="605 60 17 16"><circle cx="613.4" cy="67.6" r="4.5" stroke="#a8a8a8" fill="none" stroke-width="1.1" stroke-linecap="round" stroke-linejoin="round"/><path d="M608.9 67.6 L617.9 67.6 M613.4 63.1 Q610.8 67.6 613.4 72.1 M613.4 63.1 Q616 67.6 613.4 72.1 M609.6 65.3 L617.2 65.3 M609.6 69.9 L617.2 69.9" stroke="#a8a8a8" fill="none" stroke-width="1.1" stroke-linecap="round" stroke-linejoin="round" stroke-width="0.8"/><path d="M616.4 70.8 L619.2 73.6 M619.2 70.8 L616.4 73.6" stroke="#282828" stroke-width="2.4"/><path d="M616.4 70.8 L619.2 73.6 M619.2 70.8 L616.4 73.6" stroke="#a8a8a8" fill="none" stroke-width="1.1" stroke-linecap="round" stroke-linejoin="round" stroke-width="1"/></svg>
<svg class="i" style="left:625px;top:60px;" width="16" height="16" viewBox="625 60 16 16"><path d="M633 62.3 L637.8 64.2 L637.8 68.4 Q637.8 72 633 73.8 Q628.2 72 628.2 68.4 L628.2 64.2 Z" fill="#57c86a"/><path d="M633 63.8 L633 68 L636.4 68 L636.4 65 Z M633 68 L633 72.4 Q629.8 71.2 629.6 68 Z" fill="#1f4a28"/></svg>
<svg class="i" style="left:744px;top:60px;" width="14" height="16" viewBox="744 60 14 16"><path d="M747.6 64.3 L754.4 64.3" stroke="#fff3e4" stroke-width="1.6" stroke-linecap="round"/><path d="M749.5 63.6 L752.5 63.6" stroke="#fff3e4" stroke-width="1.2"/><rect x="748.4" y="65.3" width="5.2" height="6.6" rx="0.6" fill="none" stroke="#fff3e4" stroke-width="1.5"/></svg>
<svg class="i" style="left:58px;top:97px;" width="14" height="14" viewBox="58 97 14 14"><path d="M62.4 101.5 Q61 103.5 62.4 105.5 M67.6 101.5 Q69 103.5 67.6 105.5" stroke="#a8a8a8" fill="none" stroke-width="0.9" stroke-linecap="round"/><circle cx="65" cy="103.5" r="1" fill="#a8a8a8"/><path d="M65 104.5 L65 107.4" stroke="#a8a8a8" fill="none" stroke-width="0.9" stroke-linecap="round"/></svg>
<svg class="i" style="left:132px;top:97px;" width="14" height="14" viewBox="132 97 14 14"><path d="M139.2 100.6 L139.2 108 M135.5 104.3 L142.9 104.3" stroke="#cfcfcf" stroke-width="1.3"/></svg>
<svg class="i" style="left:750px;top:117px;" width="16" height="16" viewBox="750 117 16 16"><circle cx="756.6" cy="124" r="2.9" stroke="#bdbdbd" stroke-width="1.3" fill="none"/><path d="M758.8 126.2 L761.3 128.7" stroke="#bdbdbd" stroke-width="1.6" stroke-linecap="round"/></svg>
<svg class="i" style="left:88px;top:142px;" width="10" height="10" viewBox="88 142 10 10"><path d="M90.4 148.6 L92.6 146.4 L94.8 148.6" stroke="#d8d8d8" stroke-width="1" fill="none" stroke-linecap="round"/></svg>
<svg class="i" style="left:108px;top:160px;" width="14" height="14" viewBox="108 160 14 14"><path d="M111.7 163.4 L116.2 163.4 L119 166.2 L119 170.4 L111.7 170.4 Z" fill="none" stroke="#229a80" stroke-width="1.6" stroke-linejoin="round"/><path d="M115.8 163.4 L115.8 166.6 L119 166.6" fill="none" stroke="#2a9d86" stroke-width="1"/></svg>
<svg class="i" style="left:109px;top:177.4px;" width="13" height="12" viewBox="109 177.4 13 12"><circle cx="115.3" cy="183.4" r="4.1" fill="#ececec"/><ellipse cx="115.3" cy="183.4" rx="1.6" ry="4" fill="none" stroke="#2a2a2a" stroke-width="0.8"/><path d="M111.2 183.4 L119.4 183.4" stroke="#2a2a2a" stroke-width="0.8"/></svg>
<svg class="i" style="left:109px;top:210.6px;" width="13" height="12" viewBox="109 210.6 13 12"><circle cx="115.3" cy="216.6" r="4.1" fill="#ececec"/><ellipse cx="115.3" cy="216.6" rx="1.6" ry="4" fill="none" stroke="#2a2a2a" stroke-width="0.8"/><path d="M111.2 216.6 L119.4 216.6" stroke="#2a2a2a" stroke-width="0.8"/></svg>
<div class="t" style="left:110.4px;top:194px;font-size:9.6px;line-height:12px;color:#fff2e4;letter-spacing:1.6px">{}</div>
<svg class="i" style="left:458px;top:160.7px;" width="14" height="12" viewBox="458 160.7 14 12"><rect x="459.6" y="161.7" width="10.4" height="10" rx="2.2" fill="#f1b95b"/><path d="M462 166.1 L467.6 163.7 L465.4 169.5 L464.6 167.1 Z" fill="#fff8e8"/></svg>
<svg class="i" style="left:458px;top:177.3px;" width="14" height="12" viewBox="458 177.3 14 12"><rect x="459.6" y="178.3" width="10.4" height="10" rx="2.2" fill="#f1b95b"/><path d="M462 182.70000000000002 L467.6 180.3 L465.4 186.10000000000002 L464.6 183.70000000000002 Z" fill="#fff8e8"/></svg>
<svg class="i" style="left:458px;top:194px;" width="14" height="12" viewBox="458 194 14 12"><rect x="459.6" y="195" width="10.4" height="10" rx="2.2" fill="#f6efe6"/><circle cx="464.8" cy="200" r="3.7" fill="#d94a3d"/><path d="M464.8 200 L468.5 200 A3.7 3.7 0 0 1 463 203.2 Z" fill="#e9b83a"/><path d="M464.8 200 L463 203.2 A3.7 3.7 0 0 1 462.4 197.2 Z" fill="#3fa45a"/><circle cx="464.8" cy="200" r="1.8" fill="#fff"/><circle cx="464.8" cy="200" r="1.3" fill="#4a86d8"/></svg>
<svg class="i" style="left:458px;top:210.6px;" width="14" height="12" viewBox="458 210.6 14 12"><rect x="459.6" y="211.6" width="10.4" height="10" rx="1" fill="#565b58"/><rect x="459.6" y="211.6" width="10.4" height="2" fill="#6a6f6c"/></svg>
<svg class="i" style="left:384px;top:286px;" width="14" height="14" viewBox="384 286 14 14"><path d="M386.7 295.4 L386.7 288.6 L391.8 288.6" stroke="#bdbdbd" fill="none" stroke-width="1.1"/><rect x="388.6" y="290.2" width="5.4" height="6.6" rx="0.6" stroke="#bdbdbd" fill="none" stroke-width="1.1"/></svg>
<svg class="i" style="left:386px;top:477px;" width="12" height="12" viewBox="386 477 12 12"><path d="M390.6 479.8 L393.6 483 L390.6 486.2" stroke="#cfcfcf" fill="none" stroke-width="1.3" stroke-linecap="round" stroke-linejoin="round"/></svg>
<svg class="i" style="left:731px;top:285px;" width="14" height="12" viewBox="731 285 14 12"><path d="M733.8 287.8 L742.2 287.8 M733.8 290.8 L740.6 290.8 Q742.6 290.8 742.6 292.4 Q742.6 294 740.6 294 L738.8 294 M733.8 294 L736.2 294" stroke="#f08a2c" fill="none" stroke-width="1.2" stroke-linecap="round"/><path d="M739.8 292.8 L738.4 294 L739.8 295.2" stroke="#f08a2c" fill="none" stroke-width="1" stroke-linecap="round"/></svg>
<svg class="i" style="left:750px;top:285px;" width="14" height="14" viewBox="750 285 14 14"><path d="M753.6 293.8 L753.6 287.6 L758.4 287.6" stroke="#bdbdbd" fill="none" stroke-width="1.1"/><rect x="755.4" y="289.2" width="5.4" height="6.6" rx="0.6" stroke="#bdbdbd" fill="none" stroke-width="1.1"/></svg>
<svg class="i" style="left:698px;top:504px;" width="15" height="15" viewBox="698 504 15 15"><circle cx="705.5" cy="511.6" r="4.3" stroke="#b0b0b0" fill="none" stroke-width="1.1" stroke-linecap="round" stroke-linejoin="round"/><path d="M704.2 510.4 Q704.2 509 705.5 509 Q706.9 509 706.9 510.3 Q706.9 511.2 705.5 511.8 L705.5 512.6" stroke="#b0b0b0" fill="none" stroke-width="1.1" stroke-linecap="round" stroke-linejoin="round" stroke-width="1"/><circle cx="705.5" cy="514" r="0.6" fill="#b0b0b0"/></svg>
<svg class="i" style="left:716px;top:504px;" width="15" height="15" viewBox="716 504 15 15"><path d="M719.3 507.2 L728 507.2 L728 514.6 L724.5 514.6 L723.6 516 L722.7 514.6 L719.3 514.6 Z" stroke="#b0b0b0" fill="none" stroke-width="1.1" stroke-linecap="round" stroke-linejoin="round"/><path d="M721.8 512.6 L725.4 509.2" stroke="#b0b0b0" fill="none" stroke-width="1.1" stroke-linecap="round" stroke-linejoin="round" stroke-width="1.3"/></svg>
<svg class="i" style="left:735px;top:504px;" width="12" height="15" viewBox="735 504 12 15"><path d="M742.4 506.8 L738.9 511.4 L741.2 511.9 L739.6 516.2 L743 511.2 L740.8 510.7 Z" stroke="#b0b0b0" fill="none" stroke-width="1.1" stroke-linecap="round" stroke-linejoin="round" stroke-width="1"/></svg>
<svg class="i" style="left:752px;top:504px;" width="15" height="15" viewBox="752 504 15 15"><rect x="755.6" y="507.8" width="8.4" height="7.6" rx="0.6" stroke="#b0b0b0" fill="none" stroke-width="1.1" stroke-linecap="round" stroke-linejoin="round"/><path d="M759.8 507.8 L759.8 515.4" stroke="#b0b0b0" fill="none" stroke-width="1.1" stroke-linecap="round" stroke-linejoin="round"/></svg>
<div class="t" style="top:505.00px;font-size:8.5px;color:#bdbdbd;font-weight:normal;line-height:12px;left:360.50px;">共 4 项（选择 1 项）</div>
</body></html>
